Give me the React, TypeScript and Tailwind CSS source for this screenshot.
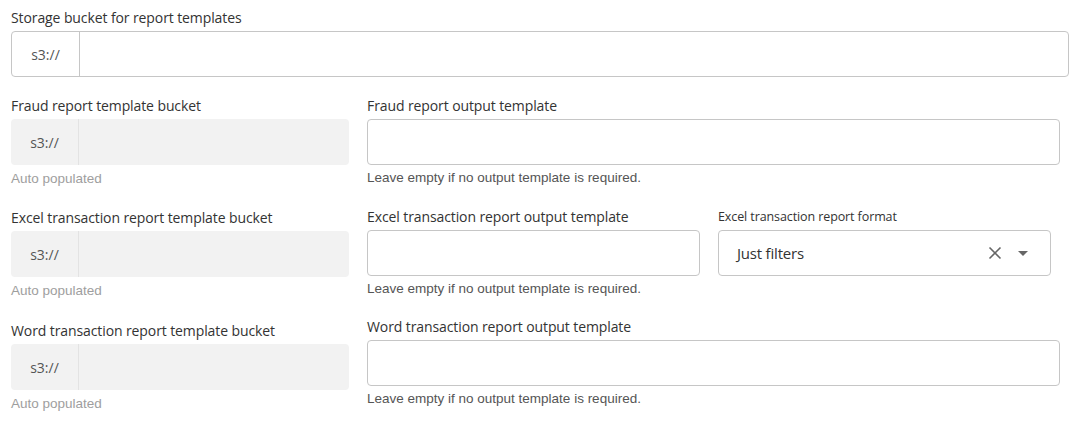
import React from "react";

const labelCls = "block h-5 leading-5 text-[14px] text-[#333] font-['Open_Sans',sans-serif] tracking-[-0.1px]";
const helpCls = "block h-4 leading-4 text-[13.5px] font-['Liberation_Sans',Arial,sans-serif]";

function BucketInput({ disabled }: { disabled?: boolean }) {
  return (
    <div
      className={`flex h-[46px] rounded-[4px] ${
        disabled ? "bg-[#f2f2f2]" : "border border-[#c6c6c6] bg-white"
      }`}
    >
      <span
        className={`flex w-[68px] shrink-0 items-center justify-center text-[14px] text-[#555] font-['Open_Sans',sans-serif] border-r ${
          disabled ? "border-[#e3e3e3]" : "border-[#c6c6c6]"
        }`}
      >
        s3://
      </span>
      <input disabled={disabled} className="min-w-0 flex-1 bg-transparent px-3 outline-none" />
    </div>
  );
}

function TextInput() {
  return <input className="block h-[46px] w-full rounded-[4px] border border-[#c6c6c6] bg-white px-3 outline-none" />;
}

function BucketField({ label, className }: { label: string; className?: string }) {
  return (
    <div className={className}>
      <label className={labelCls}>{label}</label>
      <div className="mt-[3px]">
        <BucketInput disabled />
      </div>
      <span className={`${helpCls} mt-[6px] text-[#9e9e9e]`}>Auto populated</span>
    </div>
  );
}

function OutputField({ label, className }: { label: string; className?: string }) {
  return (
    <div className={className}>
      <label className={labelCls}>{label}</label>
      <div className="mt-[3px]">
        <TextInput />
      </div>
      <span className={`${helpCls} mt-[5px] text-[#555]`}>Leave empty if no output template is required.</span>
    </div>
  );
}

function FormatSelect() {
  return (
    <div className="w-[333px]">
      <label className="block h-5 leading-5 text-[12.5px] text-[#333] font-['Open_Sans',sans-serif] tracking-[-0.1px]">
        Excel transaction report format
      </label>
      <div className="mt-[3px] flex h-[46px] items-center rounded-[4px] border border-[#c6c6c6] bg-white pl-[18px] pr-[22px]">
        <span className="flex-1 text-[15px] text-[#333] font-['Open_Sans',sans-serif] tracking-[-0.2px]">Just filters</span>
        <svg width="14" height="14" viewBox="0 0 14 14" className="mr-[16px]">
          <path d="M1.5 1.5l11 11M12.5 1.5l-11 11" stroke="#666" strokeWidth="1.6" />
        </svg>
        <svg width="10" height="5" viewBox="0 0 10 5">
          <path d="M0 0h10L5 5z" fill="#666" />
        </svg>
      </div>
    </div>
  );
}

export default function App() {
  return (
    <div className="h-[422px] w-[1076px] bg-white px-[11px] pt-2">
      <label className={labelCls}>Storage bucket for report templates</label>
      <div className="mt-[3px] w-[1058px]">
        <BucketInput />
      </div>

      <div className="mt-[19px] flex gap-[18px]">
        {/* left column: read-only buckets */}
        <div className="w-[338px]">
          <BucketField label="Fraud report template bucket" />
          <BucketField label="Excel transaction report template bucket" className="mt-[21px]" />
          <BucketField label="Word transaction report template bucket" className="mt-[22px]" />
        </div>

        {/* right column: output templates */}
        <div className="w-[693px]">
          <OutputField label="Fraud report output template" />
          <div className="mt-[21px] flex gap-[18px]">
            <OutputField label="Excel transaction report output template" className="w-[333px]" />
            <FormatSelect />
          </div>
          <OutputField label="Word transaction report output template" className="mt-[20px]" />
        </div>
      </div>
    </div>
  );
}
